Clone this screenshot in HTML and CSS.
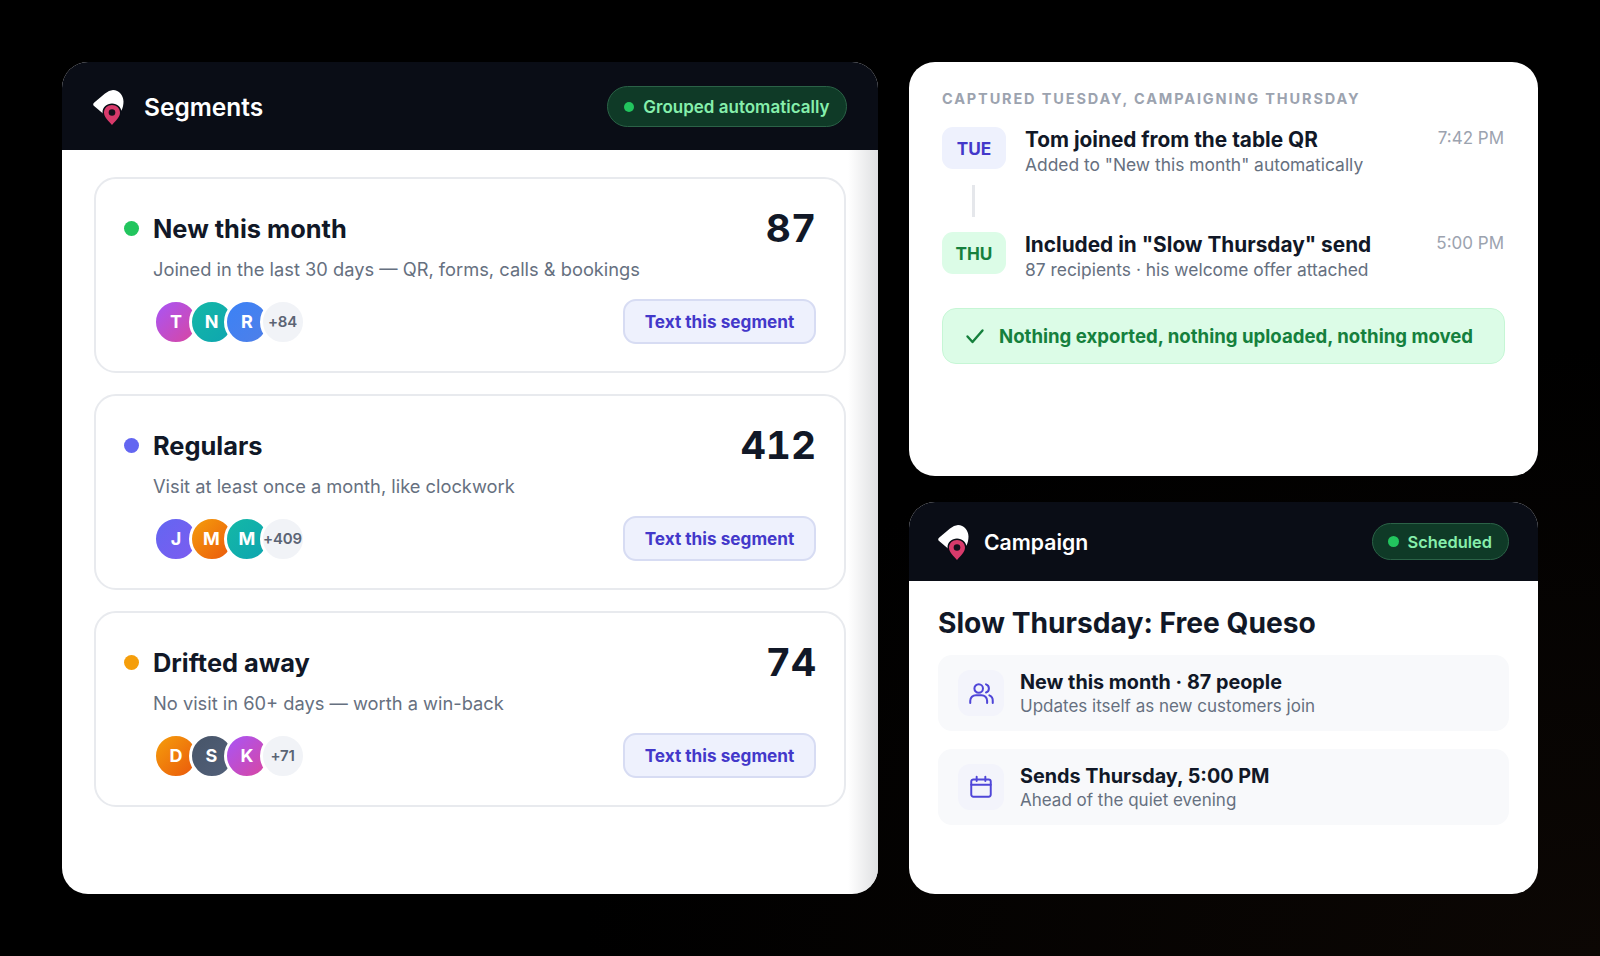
FILE: index.html
```html
<!DOCTYPE html>
<html>
<head>
	<title>Segments and campaign</title>
	<meta charset="utf-8">
	<link rel="stylesheet" href="styles.css">
</head>
<body>

	<svg width="0" height="0" class="defs">
		<symbol id="logo" viewBox="0 0 34 38">
			<path d="M1.5 16.5 Q0.5 15 2 13.8 L13 4.5 Q17 1 21 1 C27 1 31.5 6.5 31.5 12.5 C31.5 19 29 24 24 27 L14.5 27.5 Z" fill="#fff"/>
			<path d="M20 38 C15 32.5 10.5 28.5 10.5 23.5 C10.5 18.2 14.8 14.5 20 14.5 C25.2 14.5 29.5 18.2 29.5 23.5 C29.5 28.5 25 32.5 20 38 Z" fill="#0a0d16"/>
			<path d="M20 36 C16 31.5 12 28 12 23.5 C12 19 15.6 16 20 16 C24.4 16 28 19 28 23.5 C28 28 24 31.5 20 36 Z" fill="#d83a6b"/>
			<circle cx="20" cy="23.5" r="3.3" fill="#14101c"/>
		</symbol>
	</svg>

	<div class="page">

		<section class="panel panel-segments">
			<header class="bar bar-big">
				<svg class="logo"><use href="#logo"/></svg>
				<h1>Segments</h1>
				<span class="pill"><i></i>Grouped automatically</span>
			</header>
			<div class="seg-list">

				<div class="seg">
					<div class="seg-head">
						<span class="dot green"></span>
						<h2>New this month</h2>
						<b class="count">87</b>
					</div>
					<p>Joined in the last 30 days — QR, forms, calls &amp; bookings</p>
					<div class="seg-foot">
						<div class="faces">
							<span class="face f-purple">T</span>
							<span class="face f-teal">N</span>
							<span class="face f-blue">R</span>
							<span class="face f-more">+84</span>
						</div>
						<button>Text this segment</button>
					</div>
				</div>

				<div class="seg">
					<div class="seg-head">
						<span class="dot indigo"></span>
						<h2>Regulars</h2>
						<b class="count">412</b>
					</div>
					<p>Visit at least once a month, like clockwork</p>
					<div class="seg-foot">
						<div class="faces">
							<span class="face f-indigo">J</span>
							<span class="face f-orange">M</span>
							<span class="face f-teal">M</span>
							<span class="face f-more">+409</span>
						</div>
						<button>Text this segment</button>
					</div>
				</div>

				<div class="seg">
					<div class="seg-head">
						<span class="dot amber"></span>
						<h2>Drifted away</h2>
						<b class="count">74</b>
					</div>
					<p>No visit in 60+ days — worth a win-back</p>
					<div class="seg-foot">
						<div class="faces">
							<span class="face f-orange">D</span>
							<span class="face f-slate">S</span>
							<span class="face f-purple">K</span>
							<span class="face f-more">+71</span>
						</div>
						<button>Text this segment</button>
					</div>
				</div>

			</div>
		</section>

		<div class="side">

			<section class="panel panel-timeline">
				<div class="eyebrow">CAPTURED TUESDAY, CAMPAIGNING THURSDAY</div>

				<div class="event">
					<span class="day day-tue">TUE</span>
					<div class="event-text">
						<h3>Tom joined from the table QR</h3>
						<p>Added to "New this month" automatically</p>
					</div>
					<time>7:42 PM</time>
				</div>

				<div class="link"></div>

				<div class="event">
					<span class="day day-thu">THU</span>
					<div class="event-text">
						<h3>Included in "Slow Thursday" send</h3>
						<p>87 recipients · his welcome offer attached</p>
					</div>
					<time>5:00 PM</time>
				</div>

				<div class="note">
					<svg width="20" height="20" viewBox="0 0 20 20" fill="none" stroke="#15803d" stroke-width="2.4" stroke-linecap="round" stroke-linejoin="round"><path d="M2.5 10.5 L7.5 16 L17.5 4.5"/></svg>
					Nothing exported, nothing uploaded, nothing moved
				</div>
			</section>

			<section class="panel panel-campaign">
				<header class="bar">
					<svg class="logo"><use href="#logo"/></svg>
					<h1>Campaign</h1>
					<span class="pill pill-small"><i></i>Scheduled</span>
				</header>
				<div class="camp-body">
					<h2>Slow Thursday: Free Queso</h2>

					<div class="camp-row">
						<span class="camp-icon">
							<svg width="27" height="27" viewBox="0 0 24 24" fill="none" stroke="#4f46d8" stroke-width="1.8" stroke-linecap="round" stroke-linejoin="round"><circle cx="9.5" cy="7.5" r="3.8"/><path d="M2 20.5v-2a5 5 0 0 1 5-5h5a5 5 0 0 1 5 5v2"/><path d="M16 3.9a3.8 3.8 0 0 1 0 7.2"/><path d="M19 13.7a5 5 0 0 1 3 4.8v2"/></svg>
						</span>
						<div>
							<h3>New this month · 87 people</h3>
							<p>Updates itself as new customers join</p>
						</div>
					</div>

					<div class="camp-row">
						<span class="camp-icon">
							<svg width="26" height="26" viewBox="0 0 24 24" fill="none" stroke="#4f46d8" stroke-width="1.8" stroke-linecap="round" stroke-linejoin="round"><rect x="3" y="5" width="18" height="16" rx="2"/><path d="M3 10h18"/><path d="M8 2.5v4"/><path d="M16 2.5v4"/></svg>
						</span>
						<div>
							<h3>Sends Thursday, 5:00 PM</h3>
							<p>Ahead of the quiet evening</p>
						</div>
					</div>
				</div>
			</section>

		</div>
	</div>

</body>
</html>
```

FILE: styles.css
```css
*, *:before, *:after { box-sizing: border-box; }

html, body { margin: 0; height: 100%; }

body {
	background: radial-gradient(ellipse at 100% 100%, #0c0704 0%, #000 45%), #000;
	font-family: Inter, "Liberation Sans", sans-serif;
	color: #111827;
	overflow: hidden;
}

h1, h2, h3, p { margin: 0; }

.defs { position: absolute; }

.page {
	display: grid;
	grid-template-columns: 816px 629px;
	column-gap: 31px;
	padding: 62px 0 0 62px;
}

.panel { background: #fff; border-radius: 26px; overflow: hidden; position: relative; }

/* dark title bars */
.bar {
	display: flex;
	align-items: center;
	height: 79px;
	padding: 0 29px 0 28px;
	background: #0a0d16;
	color: #fff;
}
.bar h1 { font-size: 21.2px; font-weight: 600; margin-left: 13px; flex: 1; }
.bar-big { height: 88px; padding: 1px 31px 0 30px; }
.bar-big h1 { font-size: 24.5px; margin-left: 18px; }

.logo { width: 34px; height: 38px; margin-top: 2px; }

.pill {
	display: inline-flex;
	align-items: center;
	height: 41px;
	padding: 0 16.5px;
	border: 1px solid #2b6247;
	border-radius: 21px;
	background: #0f3a27;
	color: #86efac;
	font-size: 17px;
	font-weight: 600;
}
.pill i { width: 10px; height: 10px; border-radius: 50%; background: #22c55e; margin-right: 9px; }
.pill-small { height: 37px; padding: 0 16px 0 15px; font-size: 16.4px; }
.pill-small i { width: 11px; height: 11px; margin-right: 9px; }

/* segments */
.panel-segments { height: 832px; }
.panel-segments:after {
	content: "";
	position: absolute;
	top: 88px; right: 0; bottom: 0;
	width: 30px;
	background: linear-gradient(to right, rgba(220,221,223,0), #dfe0e2);
}

.seg-list { display: flex; flex-direction: column; gap: 21px; padding: 27px 32px 0; }

.seg {
	height: 196px;
	padding: 27px 28px 0;
	border: 2px solid #e8eaee;
	border-radius: 22px;
}
.seg-head { display: flex; align-items: center; height: 44px; }
.seg-head h2 { flex: 1; font-size: 25.4px; font-weight: 650; }
.count { margin-top: -1px; font-size: 38.8px; font-weight: 700; font-variant-numeric: tabular-nums; color: #111827; }

.dot { width: 15px; height: 15px; border-radius: 50%; margin-right: 14px; }
.green { background: #22c55e; }
.indigo { background: #6366f1; }
.amber { background: #f59e0b; }

.seg p { margin: 5px 0 0 29px; font-size: 18.3px; line-height: 28px; color: #667080; }

.seg-foot { display: flex; justify-content: space-between; align-items: center; height: 45px; margin: 16px 0 0 29px; }

.faces { display: flex; }
.face {
	display: flex;
	align-items: center;
	justify-content: center;
	width: 46px;
	height: 46px;
	margin-right: -10.5px;
	border: 3px solid #fff;
	border-radius: 50%;
	color: #fff;
	font-size: 18px;
	font-weight: 700;
}
.f-purple { background: linear-gradient(135deg, #a855f7, #d946a0); }
.f-teal { background: linear-gradient(135deg, #14b8a6, #0ea5b0); }
.f-blue { background: linear-gradient(135deg, #3b82f6, #4f7fe8); }
.f-indigo { background: linear-gradient(135deg, #6366f1, #7c5cf0); }
.f-orange { background: linear-gradient(135deg, #f59e0b, #ea580c); }
.f-slate { background: linear-gradient(135deg, #475569, #526079); }
.f-more { background: #f1f3f7; color: #5b6474; font-size: 15px; font-weight: 600; letter-spacing: -0.2px; }

button {
	width: 193px;
	height: 45px;
	border: 2px solid #d7dcf3;
	border-radius: 13px;
	background: #eef1fd;
	color: #4338ca;
	font-family: inherit;
	font-size: 17.2px;
	font-weight: 650;
}

/* right column */
.side { display: grid; grid-template-rows: 414px 392px; row-gap: 26px; }

.panel-timeline { padding: 28px 33px 0 33px; }

.eyebrow { font-size: 14.5px; line-height: 18px; font-weight: 700; letter-spacing: 1.85px; color: #9ca3af; }

.event { display: flex; margin-top: 19px; }
.link + .event { margin-top: 15px; }
.day {
	display: flex;
	align-items: center;
	justify-content: center;
	width: 64px;
	height: 42px;
	border-radius: 11px;
	font-size: 17.2px;
	font-weight: 700;
}
.day-tue { background: #eef1fd; color: #4338ca; }
.day-thu { background: #dcfce7; color: #15803d; }

.event-text { flex: 1; margin-left: 19px; }
.event h3 { font-size: 20.8px; line-height: 27px; font-weight: 650; margin-top: -1px; }
.event p { font-size: 17.4px; line-height: 24px; color: #667080; }
.event time { margin: -1px 1px 0 0; font-size: 17px; line-height: 24px; color: #9ca3af; }

.link { width: 3px; height: 32px; margin: 8px 0 0 30px; background: #e5e7eb; }

.note {
	display: flex;
	align-items: center;
	height: 56px;
	margin-top: 26px;
	padding-left: 22px;
	gap: 14px;
	border: 1px solid #c6f6d5;
	border-radius: 14px;
	background: #dcfce7;
	color: #15803d;
	font-size: 18.6px;
	font-weight: 700;
}

.camp-body { padding: 24px 29px 0 29px; }
.camp-body h2 { font-size: 28.2px; line-height: 36px; font-weight: 700; }

.camp-row {
	display: flex;
	align-items: center;
	height: 76px;
	margin-top: 18px;
	padding: 0 20px;
	border-radius: 14px;
	background: #f8f9fb;
}
.camp-body h2 + .camp-row { margin-top: 14px; }
.camp-icon {
	display: flex;
	align-items: center;
	justify-content: center;
	width: 46px;
	height: 46px;
	margin-right: 16px;
	border-radius: 12px;
	background: #f3f4fb;
}
.camp-row h3 { font-size: 19.8px; line-height: 26px; font-weight: 650; }
.camp-row p { font-size: 17px; line-height: 22px; color: #667080; }
```
